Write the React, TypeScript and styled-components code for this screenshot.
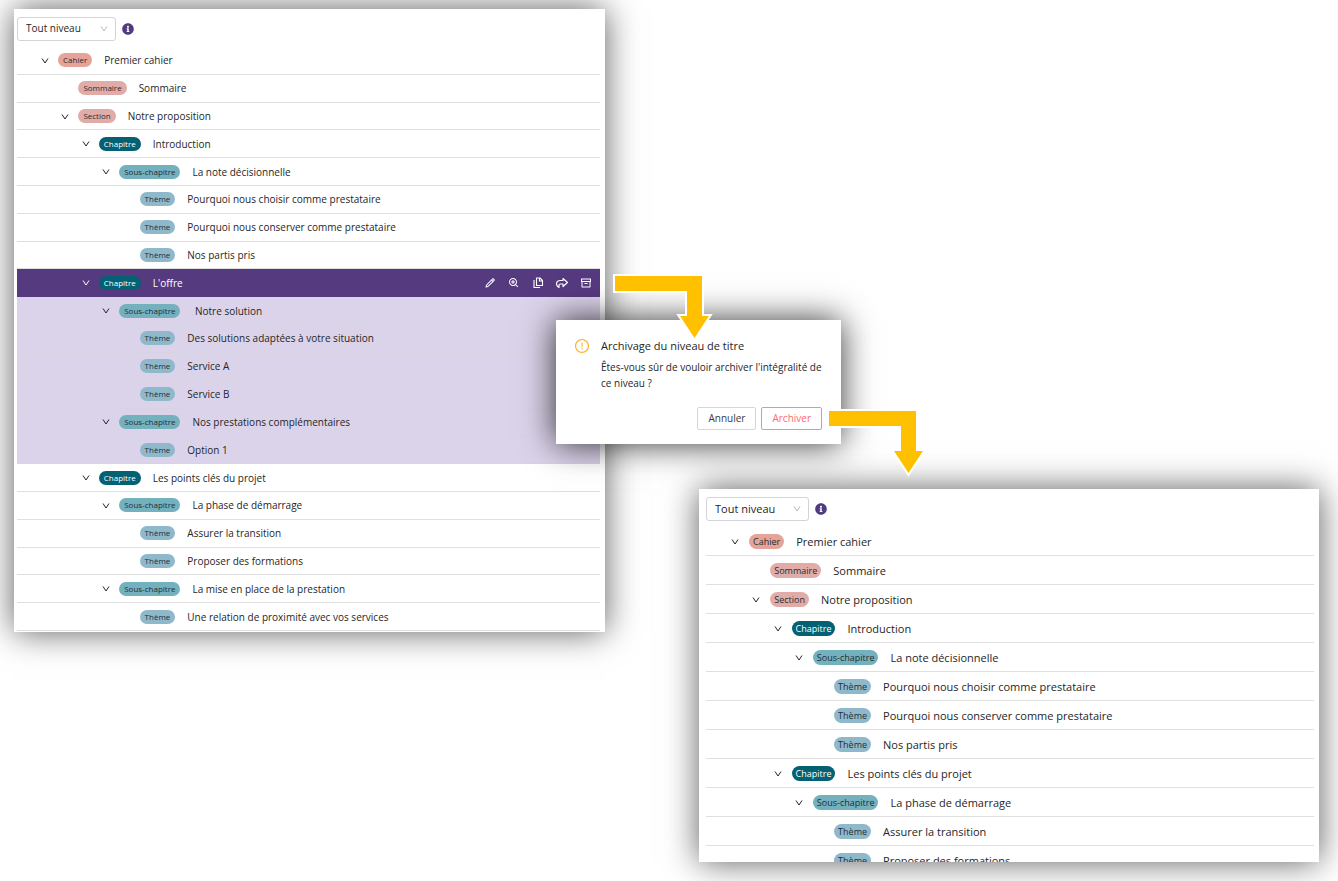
import React from "react";
import styled, { createGlobalStyle, css } from "styled-components";
import { BiPencil, BiZoomIn } from "react-icons/bi";
import { RiArchiveLine } from "react-icons/ri";
import { FaInfoCircle } from "react-icons/fa";
import { AiOutlineExclamationCircle } from "react-icons/ai";

type Kind = "Cahier" | "Sommaire" | "Section" | "Chapitre" | "Sous-chapitre" | "Thème";
type Size = "compact" | "regular";

interface Entry {
  kind: Kind;
  level: number;
  title: string;
  state?: "selected" | "included";
}

const tagColors: Record<Kind, string> = {
  Cahier: "#e6a397",
  Sommaire: "#e1aca7",
  Section: "#e1aca7",
  Chapitre: "#046073",
  "Sous-chapitre": "#74b1bf",
  Thème: "#8fb9cb",
};

const GlobalStyle = createGlobalStyle`
  * { box-sizing: border-box; }
  body {
    margin: 0;
    background: #fff;
    color: #262626;
    font-family: "Open Sans", "Noto Sans", sans-serif;
  }
  button, select { font: inherit; color: inherit; }
`;

const Scene = styled.main`
  display: grid;
  grid-template-columns: 591fr 94fr 620fr;
  align-items: start;
  min-height: 100vh;
  padding: 9px 19px 19px 14px;
  overflow: hidden;
`;

const Panel = styled.section<{ $size: Size }>`
  display: flex;
  flex-direction: column;
  min-width: 0;
  background: #fff;
  box-shadow: 0 0 32px rgba(0, 0, 0, 0.64);
  ${(p) =>
    p.$size === "compact"
      ? css`
          min-height: 623px;
          padding: 8px 5px 1px 3px;
          font-size: 10px;
        `
      : css`
          max-height: 373px;
          margin-top: 480px;
          padding: 8px 5px 0 7px;
          font-size: 11px;
          overflow: hidden;
        `}
`;

const Toolbar = styled.div`
  display: flex;
  flex: none;
  align-items: center;
  gap: 6px;
  margin-bottom: 6px;
`;

const SelectBox = styled.label<{ $size: Size }>`
  display: grid;
  align-items: center;
  width: ${(p) => (p.$size === "compact" ? 99 : 103)}px;
  > * { grid-area: 1 / 1; }
  > svg {
    justify-self: end;
    margin-right: 8px;
    color: #b8b8bc;
    pointer-events: none;
  }
`;

const LevelSelect = styled.select`
  appearance: none;
  width: 100%;
  height: 24px;
  padding: 0 8px 2px;
  border: 1px solid #d3d3da;
  border-radius: 3px;
  background: #fff;
`;

const InfoButton = styled.button`
  display: flex;
  padding: 0 0 1px;
  border: 0;
  background: none;
  color: #503a82;
  font-size: 12px;
`;

const List = styled.ul<{ $size: Size }>`
  display: grid;
  flex: ${(p) => (p.$size === "compact" ? "1" : "none")};
  grid-auto-rows: ${(p) => (p.$size === "compact" ? "minmax(27px, 1fr)" : "29px")};
  margin: 0;
  padding: 0;
  list-style: none;
`;

const Row = styled.li<{ $level: number; $size: Size; $state?: Entry["state"] }>`
  display: flex;
  align-items: center;
  padding-left: calc(${(p) => p.$level} * 3.5% + ${(p) => (p.$size === "compact" ? 24 : 25)}px);
  padding-right: 8px;
  border-bottom: 1px solid #dfdfe0;
  white-space: nowrap;
  ${(p) =>
    p.$state === "selected" &&
    css`
      background: #563a80;
      border-color: #563a80;
      color: #fff;
    `}
  ${(p) =>
    p.$state === "included" &&
    css`
      background: #dbd3ea;
      border-color: #d8d3e3;
    `}
`;

const Toggle = styled.button<{ $size: Size }>`
  display: flex;
  flex: none;
  align-items: center;
  width: 8px;
  height: 16px;
  margin-right: ${(p) => (p.$size === "compact" ? 9 : 10)}px;
  padding: 1px 0 0;
  border: 0;
  background: none;
`;

const Leaf = styled.span<{ $size: Size }>`
  flex: none;
  width: 8px;
  margin-right: ${(p) => (p.$size === "compact" ? 9 : 10)}px;
`;

const Tag = styled.span<{ $kind: Kind; $size: Size }>`
  flex: none;
  margin-right: 12px;
  padding: 0 ${(p) => (p.$size === "compact" ? 5 : 4)}px;
  border-radius: 8px;
  background: ${(p) => tagColors[p.$kind]};
  color: ${(p) => (p.$kind === "Chapitre" ? "#fff" : "#1f2d33")};
  font-size: ${(p) => (p.$size === "compact" ? 8 : 9)}px;
  font-weight: ${(p) => (p.$kind === "Chapitre" ? 500 : 400)};
  line-height: ${(p) => (p.$size === "compact" ? 14 : 15)}px;
`;

const Title = styled.span`
  flex: 1;
  white-space: pre;
`;

const Actions = styled.div`
  display: flex;
  gap: 12px;
`;

const ActionButton = styled.button`
  display: flex;
  padding: 0;
  border: 0;
  background: none;
  font-size: 12px;
`;

const Middle = styled.div`
  position: relative;
  z-index: 1;
`;

const Dialog = styled.div`
  position: absolute;
  top: 311px;
  left: -49px;
  display: flex;
  gap: 11px;
  width: 285px;
  padding: 18px 19px 14px 18px;
  background: #fff;
  box-shadow: 0 0 32px rgba(0, 0, 0, 0.8);
  > svg {
    flex: none;
    color: #f9b233;
    font-size: 16px;
  }
`;

const DialogTitle = styled.h2`
  margin: 0 0 5px;
  font-size: 11px;
  font-weight: 400;
  line-height: 16px;
`;

const DialogText = styled.p`
  margin: 0 0 16px;
  font-size: 10px;
  line-height: 16px;
`;

const DialogButtons = styled.div`
  display: flex;
  justify-content: flex-end;
  gap: 5px;
`;

const DialogButton = styled.button<{ $danger?: boolean }>`
  height: 23px;
  padding: 0 10px 1px;
  border: 1px solid ${(p) => (p.$danger ? "#fb8a90" : "#d6d6d6")};
  border-radius: 2px;
  background: #fff;
  color: ${(p) => (p.$danger ? "#fb6a72" : "#3a3a3a")};
  font-size: 10px;
`;

const Arrow = styled.svg<{ $step: 1 | 2 }>`
  position: absolute;
  top: ${(p) => (p.$step === 1 ? 263 : 398)}px;
  left: ${(p) => (p.$step === 1 ? 6 : 220)}px;
`;

function Chevron({ size }: { size: number }) {
  return (
    <svg width={size} height={size} viewBox="0 0 8 8" fill="none" stroke="currentColor" aria-hidden="true">
      <path d="M1 1.5 4 6 7 1.5" />
    </svg>
  );
}

function CopyIcon() {
  return (
    <svg width="1em" height="1em" viewBox="0 0 24 24" fill="none" stroke="currentColor" strokeWidth="2.2" strokeLinejoin="round" aria-hidden="true">
      <path d="M9 2h7l5 5v10H9z" />
      <path d="M15 2v6h6M4 6v15h12" />
    </svg>
  );
}

function ForwardIcon() {
  return (
    <svg width="1em" height="1em" viewBox="0 0 24 24" fill="none" stroke="currentColor" strokeWidth="2.4" strokeLinejoin="round" aria-hidden="true">
      <path d="M14 3l9 8-9 8v-5H9c-2 0-3 1-3 3v4c-3-2-5-5-5-7 0-4 3-7 8-7h5z" />
    </svg>
  );
}

function StepArrow({ step }: { step: 1 | 2 }) {
  return (
    <Arrow $step={step} width="102" height="72" viewBox="0 0 102 72" aria-hidden="true">
      <path d="M4 4H91V44H98L83.500 66 69 44H76V19H4z" fill="#ffc000" stroke="#fff" strokeWidth="4" paintOrder="stroke" />
    </Arrow>
  );
}

function Tree({ id, size, entries }: { id: string; size: Size; entries: Entry[] }) {
  return (
    <Panel $size={size}>
      <Toolbar>
        <SelectBox $size={size} htmlFor={id}>
          <LevelSelect id={id} aria-label="Niveau">
            <option>Tout niveau</option>
          </LevelSelect>
          <Chevron size={8} />
        </SelectBox>
        <InfoButton type="button" aria-label="Informations">
          <FaInfoCircle />
        </InfoButton>
      </Toolbar>
      <List $size={size}>
        {entries.map((entry) => (
          <Row key={entry.title} $level={entry.level} $size={size} $state={entry.state}>
            {entry.kind === "Thème" || entry.kind === "Sommaire" ? (
              <Leaf $size={size} />
            ) : (
              <Toggle type="button" $size={size} aria-label="Replier" aria-expanded="true">
                <Chevron size={8} />
              </Toggle>
            )}
            <Tag $kind={entry.kind} $size={size}>{entry.kind}</Tag>
            <Title>{entry.title}</Title>
            {entry.state === "selected" && (
              <Actions>
                <ActionButton type="button" aria-label="Modifier"><BiPencil /></ActionButton>
                <ActionButton type="button" aria-label="Agrandir"><BiZoomIn /></ActionButton>
                <ActionButton type="button" aria-label="Dupliquer"><CopyIcon /></ActionButton>
                <ActionButton type="button" aria-label="Déplacer"><ForwardIcon /></ActionButton>
                <ActionButton type="button" aria-label="Archiver"><RiArchiveLine /></ActionButton>
              </Actions>
            )}
          </Row>
        ))}
      </List>
    </Panel>
  );
}

const opening: Entry[] = [
  { kind: "Cahier", level: 0, title: "Premier cahier" },
  { kind: "Sommaire", level: 1, title: "Sommaire" },
  { kind: "Section", level: 1, title: "Notre proposition" },
  { kind: "Chapitre", level: 2, title: "Introduction" },
  { kind: "Sous-chapitre", level: 3, title: "La note décisionnelle" },
  { kind: "Thème", level: 4, title: "Pourquoi nous choisir comme prestataire" },
  { kind: "Thème", level: 4, title: "Pourquoi nous conserver comme prestataire" },
  { kind: "Thème", level: 4, title: "Nos partis pris" },
];

const offer: Entry[] = [
  { kind: "Chapitre", level: 2, title: "L'offre", state: "selected" },
  { kind: "Sous-chapitre", level: 3, title: "\u00a0Notre solution", state: "included" },
  { kind: "Thème", level: 4, title: "Des solutions adaptées à votre situation", state: "included" },
  { kind: "Thème", level: 4, title: "Service A", state: "included" },
  { kind: "Thème", level: 4, title: "Service B", state: "included" },
  { kind: "Sous-chapitre", level: 3, title: "Nos prestations complémentaires", state: "included" },
  { kind: "Thème", level: 4, title: "Option 1", state: "included" },
];

const keyPoints: Entry[] = [
  { kind: "Chapitre", level: 2, title: "Les points clés du projet" },
  { kind: "Sous-chapitre", level: 3, title: "La phase de démarrage" },
  { kind: "Thème", level: 4, title: "Assurer la transition" },
  { kind: "Thème", level: 4, title: "Proposer des formations" },
];

const rollout: Entry[] = [
  { kind: "Sous-chapitre", level: 3, title: "La mise en place de la prestation" },
  { kind: "Thème", level: 4, title: "Une relation de proximité avec vos services" },
];

export default function App() {
  return (
    <>
      <GlobalStyle />
      <Scene>
        <Tree id="niveau-avant" size="compact" entries={[...opening, ...offer, ...keyPoints, ...rollout]} />
        <Middle>
          <Dialog role="dialog" aria-labelledby="archivage">
            <AiOutlineExclamationCircle aria-hidden="true" />
            <div>
              <DialogTitle id="archivage">Archivage du niveau de titre</DialogTitle>
              <DialogText>Êtes-vous sûr de vouloir archiver l'intégralité de ce niveau ?</DialogText>
              <DialogButtons>
                <DialogButton type="button">Annuler</DialogButton>
                <DialogButton type="button" $danger>Archiver</DialogButton>
              </DialogButtons>
            </div>
          </Dialog>
          <StepArrow step={1} />
          <StepArrow step={2} />
        </Middle>
        <Tree id="niveau-apres" size="regular" entries={[...opening, ...keyPoints]} />
      </Scene>
    </>
  );
}
